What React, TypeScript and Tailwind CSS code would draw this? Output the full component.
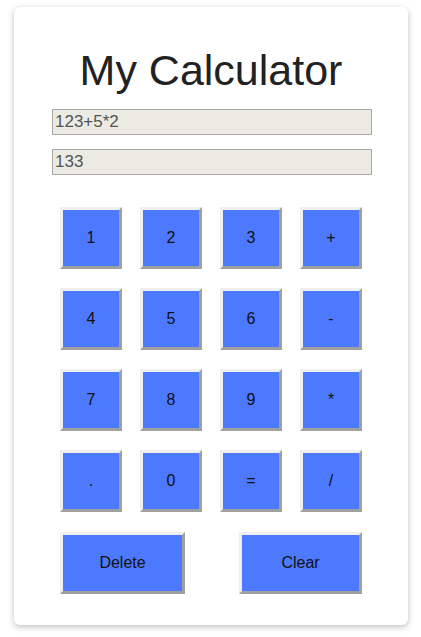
import React from "react";

const KEYS = ["1", "2", "3", "+", "4", "5", "6", "-", "7", "8", "9", "*", ".", "0", "=", "/"];

const btn =
  "flex items-center justify-center bg-[#4d79ff] text-[16px] text-[#111] border-[3px] border-t-[#efefef] border-l-[#efefef] border-b-[#a0a0a0] border-r-[#a0a0a0]";

export default function App() {
  return (
    <div className="min-h-[637px] bg-white pt-[7px] font-['Liberation_Sans',Arial,sans-serif]">
      <div className="ml-[14px] w-[394px] h-[618px] rounded-md bg-white shadow-[0_2px_6px_rgba(0,0,0,0.25)]">
        <h1 className="pt-[37px] text-center text-[43px] leading-[52px] text-[#222]">My Calculator</h1>

        <div className="ml-[38px] mt-[13px] flex w-[320px] flex-col gap-[14px]">
          <input
            readOnly
            value="123+5*2"
            className="h-[26px] w-full border border-[#a9a9a9] bg-[#ebebe4] px-[2px] text-[17px] text-[#545454] outline-none"
          />
          <input
            readOnly
            value="133"
            className="h-[26px] w-full border border-[#a9a9a9] bg-[#ebebe4] px-[2px] text-[17px] text-[#545454] outline-none"
          />
        </div>

        <div className="ml-[46px] mt-[32px] w-[302px]">
          <div className="grid grid-cols-[repeat(4,62px)] gap-x-[18px] gap-y-[19px]">
            {KEYS.map((k) => (
              <button key={k} className={`${btn} h-[62px] w-[62px]`}>
                {k}
              </button>
            ))}
          </div>
          <div className="mt-[20px] flex justify-between">
            <button className={`${btn} h-[62px] w-[125px]`}>Delete</button>
            <button className={`${btn} h-[62px] w-[123px]`}>Clear</button>
          </div>
        </div>
      </div>
    </div>
  );
}
